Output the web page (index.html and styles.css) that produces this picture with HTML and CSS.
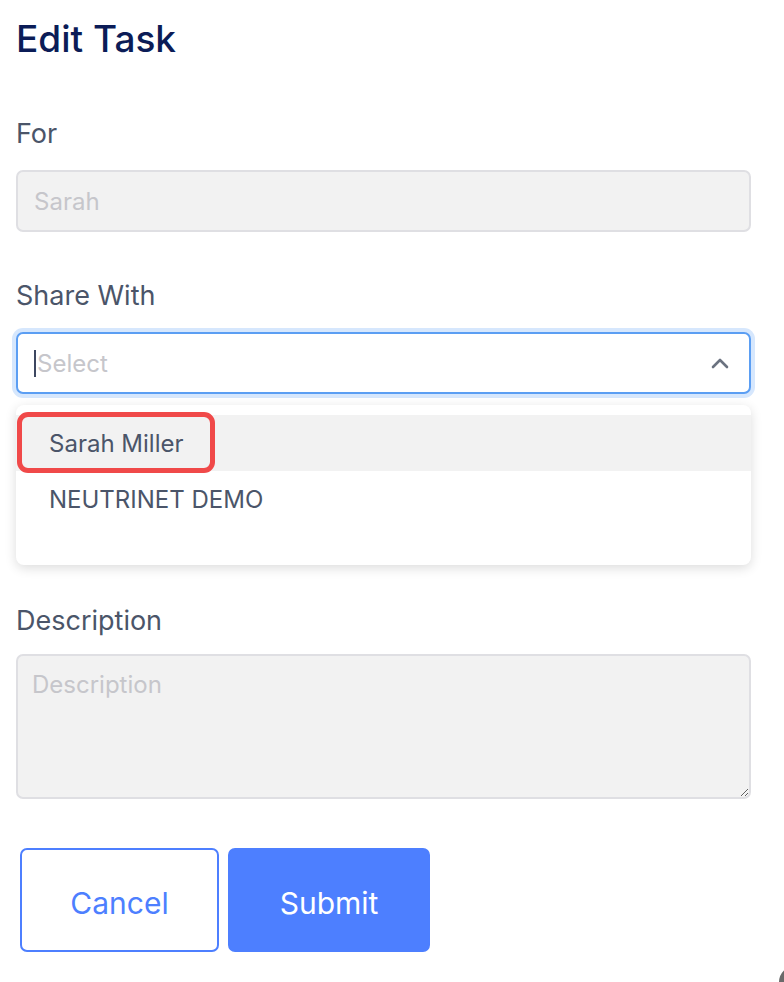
FILE: index.html
```html
<!DOCTYPE html>
<html lang="en">
<head>
<meta charset="utf-8">
<title>Edit Task</title>
<link rel="stylesheet" href="styles.css">
</head>
<body>
<div class="page">
  <h1 class="title">Edit Task</h1>

  <div class="group">
    <label class="label">For</label>
    <div class="field field-disabled"><span class="placeholder">Sarah</span></div>
  </div>

  <div class="group">
    <label class="label">Share With</label>
    <div class="field field-focus">
      <span class="caret"></span><span class="placeholder">Select</span>
      <svg class="chevron" width="18" height="11" viewBox="0 0 18 11"><polyline points="2,9 9,2 16,9" fill="none" stroke="#6b7280" stroke-width="2.6" stroke-linecap="round" stroke-linejoin="round"/></svg>
    </div>
    <div class="menu">
      <div class="option option-active">Sarah Miller<span class="annot"></span></div>
      <div class="option">NEUTRINET DEMO</div>
    </div>
  </div>

  <div class="group group-desc">
    <label class="label">Description</label>
    <textarea class="textarea" placeholder="Description"></textarea>
  </div>

  <div class="actions">
    <button class="btn btn-outline">Cancel</button>
    <button class="btn btn-primary">Submit</button>
  </div>
</div>
<div class="corner"></div>
</body>
</html>
```

FILE: styles.css
```css
html, body {
  margin: 0;
  padding: 0;
  background: #ffffff;
  font-family: "Inter", "Noto Sans", "Liberation Sans", sans-serif;
  overflow: hidden;
}

.page {
  width: 735px;
  padding: 17px 0 0 16px;
}

.title {
  margin: 0 0 56px 0;
  font-size: 37px;
  line-height: 44px;
  font-weight: 500;
  color: #0b1c57;
}

.group {
  display: flex;
  flex-direction: column;
  margin-bottom: 47px;
}

.label {
  display: block;
  font-size: 27px;
  line-height: 34px;
  color: #4b5569;
  margin-bottom: 19px;
}

.field {
  position: relative;
  box-sizing: border-box;
  height: 62px;
  display: flex;
  align-items: center;
  padding: 0 16px;
  border: 2px solid #dfdfe3;
  border-radius: 7px;
  background: #f2f2f2;
  font-size: 24px;
}

.placeholder {
  color: #c6c6cb;
}

.field-focus {
  background: #ffffff;
  border-color: #5b9ef3;
  box-shadow: 0 0 0 4px #d6e7fd;
}

.caret {
  width: 2px;
  height: 27px;
  background: #3d4760;
  margin-right: 1px;
}

.chevron {
  margin-left: auto;
  margin-right: 4px;
}

.menu {
  position: relative;
  margin-top: 11px;
  margin-bottom: -8px;
  padding: 10px 0 38px 0;
  background: #ffffff;
  border-radius: 8px;
  box-shadow: 0 3px 12px rgba(0, 0, 0, 0.14);
}

.option {
  position: relative;
  height: 56px;
  display: flex;
  align-items: center;
  padding-left: 33px;
  font-size: 24px;
  color: #4b5569;
}

.option-active {
  background: #f2f2f2;
}

.annot {
  position: absolute;
  left: 1px;
  top: -3px;
  width: 198px;
  height: 61px;
  box-sizing: border-box;
  border: 5px solid #f04949;
  border-radius: 11px;
}

.group-desc {
  margin-bottom: 49px;
}

.group-desc .label {
  margin-bottom: 16px;
}

.textarea {
  display: block;
  box-sizing: border-box;
  width: 100%;
  height: 145px;
  margin: 0;
  padding: 11px 14px;
  border: 2px solid #dfdfe3;
  border-radius: 7px;
  background: #f2f2f2;
  font-family: inherit;
  font-size: 24px;
  line-height: 36px;
  color: #4b5569;
  outline: none;
}

.textarea::placeholder {
  color: #c6c6cb;
}

.actions {
  display: flex;
  gap: 9px;
  margin-left: 4px;
}

.btn {
  box-sizing: border-box;
  height: 104px;
  padding: 5px 0 0 0;
  border-radius: 7px;
  font-family: inherit;
  font-size: 30px;
  cursor: pointer;
}

.btn-outline {
  width: 199px;
  background: #ffffff;
  border: 2px solid #4d7fff;
  color: #4d7fff;
}

.btn-primary {
  width: 202px;
  background: #4d7fff;
  border: 2px solid #4d7fff;
  color: #ffffff;
}

.corner {
  position: fixed;
  left: 779px;
  top: 966px;
  width: 40px;
  height: 40px;
  border-radius: 16px;
  background: #6a6a6a;
}
```
